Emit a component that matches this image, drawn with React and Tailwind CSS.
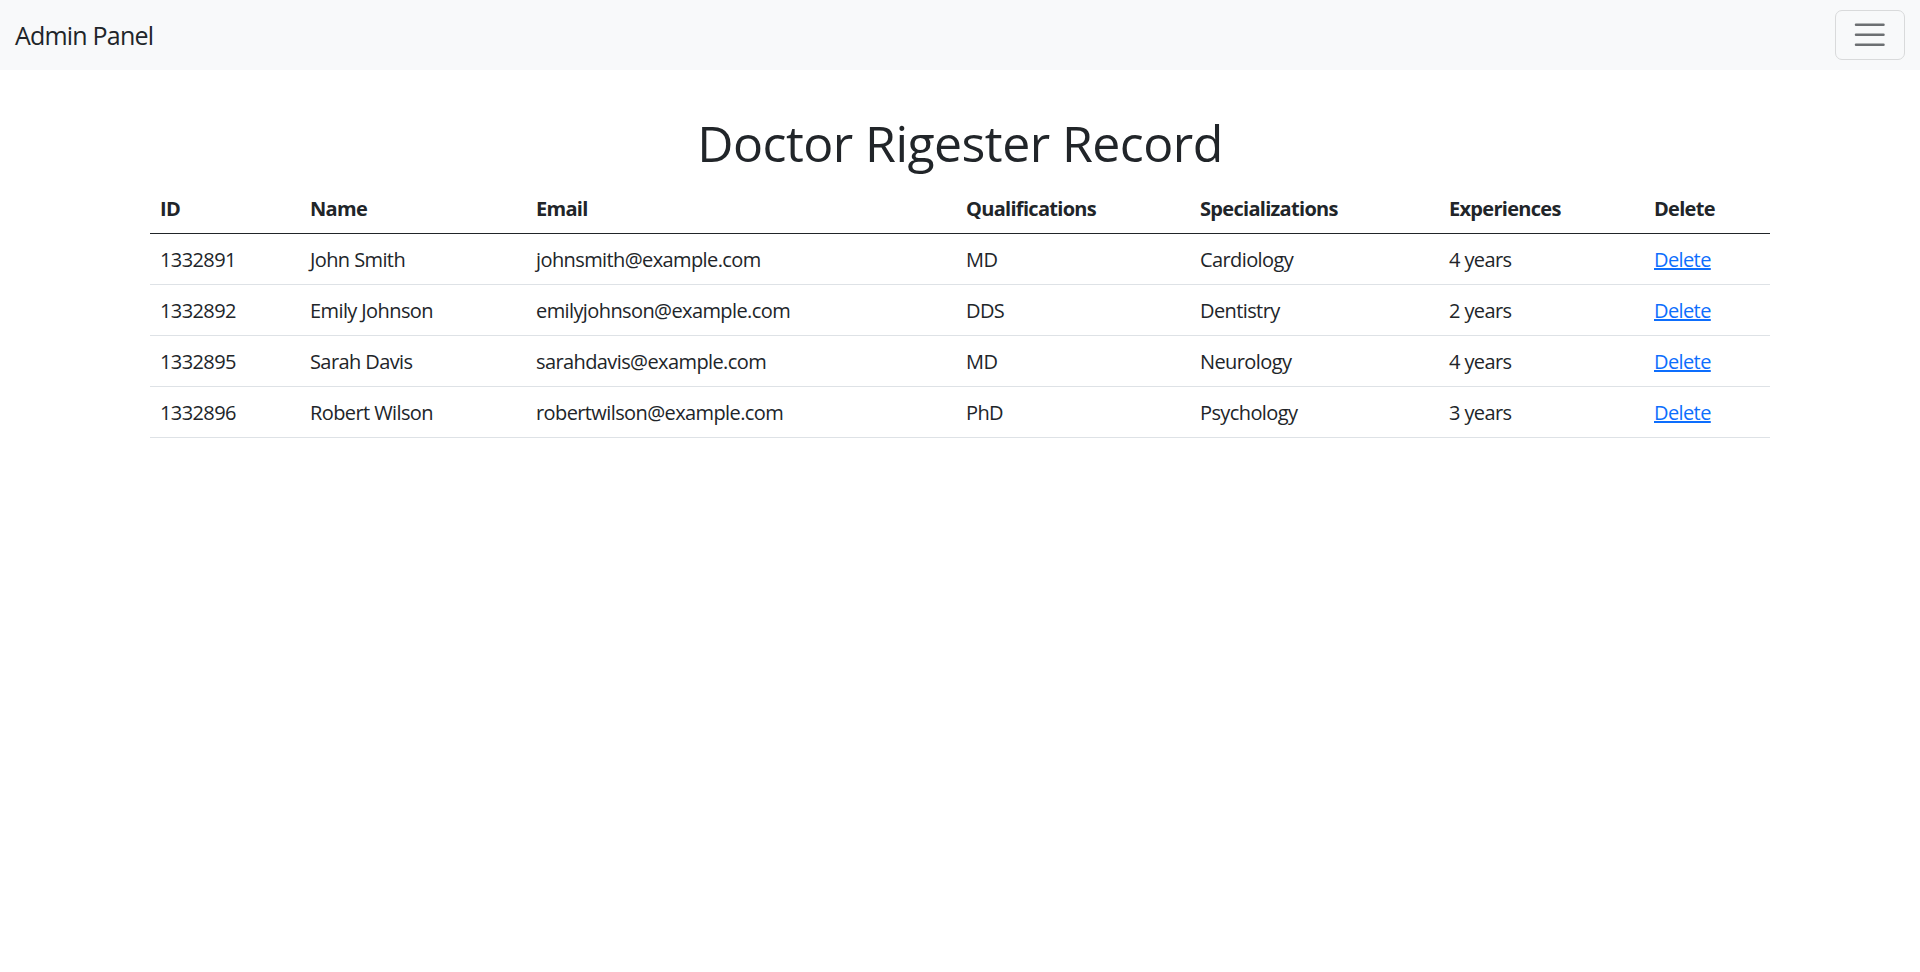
import React from "react";

const doctors = [
  { id: "1332891", name: "John Smith", email: "johnsmith@example.com", qual: "MD", spec: "Cardiology", exp: "4 years" },
  { id: "1332892", name: "Emily Johnson", email: "emilyjohnson@example.com", qual: "DDS", spec: "Dentistry", exp: "2 years" },
  { id: "1332895", name: "Sarah Davis", email: "sarahdavis@example.com", qual: "MD", spec: "Neurology", exp: "4 years" },
  { id: "1332896", name: "Robert Wilson", email: "robertwilson@example.com", qual: "PhD", spec: "Psychology", exp: "3 years" },
];

const columns = [
  { label: "ID", w: "w-[150px]" },
  { label: "Name", w: "w-[226px]" },
  { label: "Email", w: "w-[430px]" },
  { label: "Qualifications", w: "w-[234px]" },
  { label: "Specializations", w: "w-[249px]" },
  { label: "Experiences", w: "w-[205px]" },
  { label: "Delete", w: "w-[126px]" },
];

const cell = "px-[10px] pt-[11px] pb-[9px]";

const App = () => {
  return (
    <div className="min-h-[972px] bg-white text-[#212529] font-['Segoe_UI','Open_Sans',sans-serif] text-[20px] leading-[1.5] tracking-[-0.6px]">
      {/* Navbar */}
      <nav className="bg-[#f8f9fa] h-[70px] px-[15px] flex items-center justify-between">
        <a href="#" className="text-[25px] leading-[1.5] text-[#212529] tracking-[-0.8px] pt-[1px]">
          Admin Panel
        </a>
        <button className="w-[70px] h-[50px] border border-[#d9dadb] rounded-[7px] flex items-center justify-center">
          <svg width="37.5" height="37.5" viewBox="0 0 30 30">
            <path
              d="M4 7h22M4 15h22M4 23h22"
              stroke="rgba(33,37,41,0.65)"
              strokeWidth="2"
              strokeLinecap="round"
            />
          </svg>
        </button>
      </nav>

      {/* Content */}
      <div className="w-[1620px] mx-auto">
        <h1 className="text-center text-[50px] font-medium leading-[1.2] tracking-[-0.55px] mt-[43px] mb-[10px]">
          Doctor Rigester Record
        </h1>
        <table className="w-full table-fixed border-collapse">
          <thead>
            <tr className="border-b border-[#212529]">
              {columns.map((c) => (
                <th key={c.label} className={`${c.w} ${cell} text-left font-bold tracking-[-0.7px]`}>
                  {c.label}
                </th>
              ))}
            </tr>
          </thead>
          <tbody>
            {doctors.map((d) => (
              <tr key={d.id} className="border-b border-[#dee2e6]">
                <td className={cell}>{d.id}</td>
                <td className={cell}>{d.name}</td>
                <td className={cell}>{d.email}</td>
                <td className={cell}>{d.qual}</td>
                <td className={cell}>{d.spec}</td>
                <td className={cell}>{d.exp}</td>
                <td className={cell}>
                  <a href="#" className="text-[#0d6efd] underline">
                    Delete
                  </a>
                </td>
              </tr>
            ))}
          </tbody>
        </table>
      </div>
    </div>
  );
};

export default App;
